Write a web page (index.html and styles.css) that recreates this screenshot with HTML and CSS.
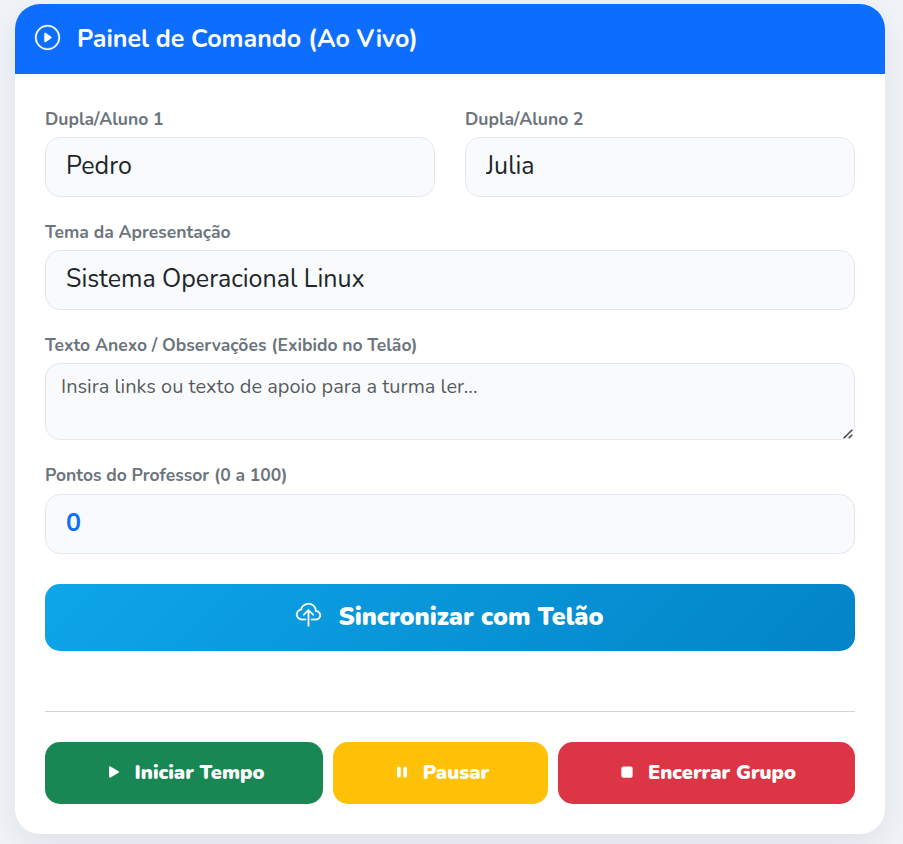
FILE: index.html
```
<!DOCTYPE html>
<html lang="pt-BR">
<head>
<meta charset="utf-8">
<title>Painel de Comando</title>
<link rel="stylesheet" href="styles.css">
</head>
<body>
<main class="card">
  <header class="card-header">
    <svg class="icon-play-circle" viewBox="0 0 16 16" fill="currentColor" stroke="currentColor" stroke-width=".2"><path d="M8 15A7 7 0 1 1 8 1a7 7 0 0 1 0 14m0 1A8 8 0 1 0 8 0a8 8 0 0 0 0 16"/><path d="M6.271 5.055a.5.5 0 0 1 .52.038l3.5 2.5a.5.5 0 0 1 0 .814l-3.5 2.5A.5.5 0 0 1 6 10.5v-5a.5.5 0 0 1 .271-.445"/></svg>
    <h1>Painel de Comando (Ao Vivo)</h1>
  </header>
  <form class="card-body">
    <div class="row">
      <div class="field"><label for="aluno1">Dupla/Aluno 1</label><input class="control" id="aluno1" type="text" value="Pedro"></div>
      <div class="field"><label for="aluno2">Dupla/Aluno 2</label><input class="control" id="aluno2" type="text" value="Julia"></div>
    </div>
    <div class="field"><label for="tema">Tema da Apresentação</label><input class="control" id="tema" type="text" value="Sistema Operacional Linux"></div>
    <div class="field field-notes"><label for="obs">Texto Anexo / Observações (Exibido no Telão)</label><textarea class="control area" id="obs" placeholder="Insira links ou texto de apoio para a turma ler..."></textarea><svg class="grip" viewBox="0 0 10 10"><path d="M.7 9.3 9.3.7M5.700 9.300 9.300 5.700"/></svg></div>
    <div class="field field-points"><label for="pontos">Pontos do Professor (0 a 100)</label><input class="control points" id="pontos" type="number" min="0" max="100" value="0"></div>
    <button type="button" class="btn sync">
      <svg class="icon-cloud" viewBox="0 0 16 16" fill="currentColor" stroke="currentColor" stroke-width=".15"><path fill-rule="evenodd" d="M4.406 1.342A5.53 5.53 0 0 1 8 0c2.69 0 4.923 2 5.166 4.579C14.758 4.804 16 6.137 16 7.773 16 9.569 14.502 11 12.687 11H10a.5.5 0 0 1 0-1h2.688C13.979 10 15 8.988 15 7.773c0-1.216-1.020-2.228-2.313-2.228h-.5v-.5C12.188 2.825 10.328 1 8 1a4.530 4.530 0 0 0-2.941 1.100c-.757.652-1.153 1.438-1.153 2.055v.448l-.445.049C2.064 4.805 1 5.952 1 7.318 1 8.785 2.230 10 3.781 10H6a.5.5 0 0 1 0 1H3.781C1.708 11 0 9.366 0 7.318c0-1.763 1.266-3.223 2.942-3.593.143-.863.698-1.723 1.464-2.383"/><path fill-rule="evenodd" d="M7.646 4.146a.5.5 0 0 1 .708 0l3 3a.5.5 0 0 1-.708.708L8.500 5.707V14.500a.5.5 0 0 1-1 0V5.707L5.354 7.854a.5.5 0 1 1-.708-.708z"/></svg>
      <span>Sincronizar com Telão</span>
    </button>
    <hr>
    <div class="actions">
      <button type="button" class="btn start"><svg viewBox="0 0 16 16" fill="currentColor"><path d="m11.596 8.697-6.363 3.692c-.54.313-1.233-.066-1.233-.697V4.308c0-.63.692-1.01 1.233-.696l6.363 3.692a.802.802 0 0 1 0 1.393"/></svg><span>Iniciar Tempo</span></button>
      <button type="button" class="btn pause"><svg viewBox="0 0 16 16" fill="currentColor"><path d="M5.5 3.5A1.5 1.5 0 0 1 7 5v6a1.5 1.5 0 0 1-3 0V5a1.5 1.5 0 0 1 1.5-1.5m5 0A1.5 1.5 0 0 1 12 5v6a1.5 1.5 0 0 1-3 0V5a1.5 1.5 0 0 1 1.5-1.5"/></svg><span>Pausar</span></button>
      <button type="button" class="btn stop"><svg viewBox="0 0 16 16" fill="currentColor"><path d="M5 3.5h6A1.5 1.5 0 0 1 12.5 5v6a1.5 1.5 0 0 1-1.5 1.5H5A1.5 1.5 0 0 1 3.5 11V5A1.5 1.5 0 0 1 5 3.5"/></svg><span>Encerrar Grupo</span></button>
    </div>
  </form>
</main>
</body>
</html>
```
FILE: styles.css
```
* { box-sizing: border-box; }
body { margin: 0; height: 844px; overflow: hidden; background: #f0f4f8; padding: 4px 18px 10px 15px; font-family: Nunito, "Open Sans", "Noto Sans", sans-serif; }
.card { height: 830px; border-radius: 25px; overflow: hidden; background: #fff; box-shadow: 0 12px 38px rgba(0,0,0,.08); }
.card-header { height: 70px; background: #0d6efd; color: #fff; padding: 0 20px; display: flex; align-items: center; gap: 17px; }
.icon-play-circle { width: 25px; height: 25px; margin-bottom: 3px; overflow: visible; }
h1 { margin: 0; font-size: 25px; font-weight: 700; line-height: 30px; }
.card-body { padding: 33px 30px 30px; }
.row { display: grid; grid-template-columns: 1fr 1fr; gap: 30px; }
.field { margin-bottom: 23px; }
.field-notes { position: relative; }
.field-points label { height: 31px; }
label { display: block; height: 30px; line-height: 24px; font-size: 17.5px; font-weight: 700; color: #6c757d; }
.control { display: block; width: 100%; height: 60px; margin: 0; border: 1px solid #e2e8f0; border-radius: 15px; background: #f8fafc; padding: 0 20px 2px; font-family: inherit; font-size: 25px; font-weight: 400; color: #212529; outline: 0; }
.area { height: 77px; padding: 8px 15px; font-size: 20px; line-height: 30px; resize: none; }
.area::placeholder { color: #212529bf; opacity: 1; }
.grip { position: absolute; right: 2px; bottom: 1px; width: 10px; height: 10px; fill: none; stroke: #45474a; stroke-width: 1.5; }
.points { color: #0d6efd; font-weight: 700; }
.btn { border: 0; color: #fff; font-family: inherit; font-weight: 900; display: flex; align-items: center; justify-content: center; padding: 0; border-radius: 15px; }
.sync { width: 100%; height: 67px; margin-top: 30px; background: linear-gradient(135deg, #0ea5e9, #0284c7); font-size: 25px; gap: 17px; padding-bottom: 2px; }
.icon-cloud { width: 25px; height: 25px; margin-bottom: 2px; overflow: visible; }
hr { border: 0; height: 1px; background: #d3d5d6; margin: 60px 0 30px; }
.actions { display: grid; grid-template-columns: 278px 215px 297px; gap: 10px; }
.actions .btn { height: 62px; font-size: 20px; gap: 11px; padding-bottom: 2px; }
.actions svg { width: 20px; height: 20px; }
.start { background: #198754; }
.pause { background: #ffc107; }
.stop { background: #dc3545; }
```
